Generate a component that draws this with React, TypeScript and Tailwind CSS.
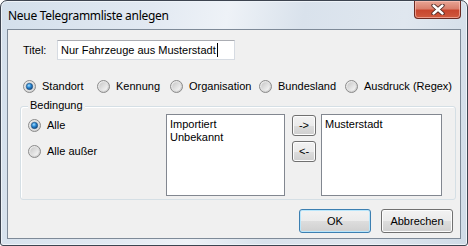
import React, { useId } from 'react';

const ui = "font-['Liberation_Sans',Arial,sans-serif] text-[11px] text-black";

const Radio: React.FC<{ label: string; checked?: boolean }> = ({ label, checked }) => {
  const id = useId().replace(/:/g, '');
  return (
    <div className="flex items-center">
      <svg width="13" height="13" viewBox="0 0 13 13" className="shrink-0">
        <defs>
          <linearGradient id={`o${id}`} x1="0" y1="0" x2="1" y2="1">
            <stop offset="0" stopColor="#f4f4f4" />
            <stop offset="1" stopColor="#c9c9c9" />
          </linearGradient>
          <linearGradient id={`i${id}`} x1="0" y1="0" x2="1" y2="1">
            <stop offset="0" stopColor="#c8c8c8" />
            <stop offset="1" stopColor="#f8f8f8" />
          </linearGradient>
          <radialGradient id={`b${id}`} cx="0.4" cy="0.35" r="0.7">
            <stop offset="0" stopColor="#a6e0ff" />
            <stop offset="0.45" stopColor="#2b8ad6" />
            <stop offset="1" stopColor="#0f3e72" />
          </radialGradient>
        </defs>
        <circle cx="6.5" cy="6.5" r="6" fill={`url(#o${id})`} stroke="#8a8a8a" />
        <circle cx="6.5" cy="6.5" r="4.2" fill={`url(#i${id})`} />
        {checked && <circle cx="6.5" cy="6.5" r="3.2" fill={`url(#b${id})`} stroke="#1c4f80" strokeWidth="0.6" />}
      </svg>
      <span className="ml-[6px] leading-[13px]">{label}</span>
    </div>
  );
};

const WinButton: React.FC<{ label: string; def?: boolean; className?: string }> = ({ label, def, className }) => (
  <div
    className={`flex items-center justify-center rounded-[3px] border ${
      def ? 'border-[#3c7fb1] shadow-[inset_0_0_0_1px_#b9e6fb]' : 'border-[#707070] shadow-[inset_0_0_0_1px_#fcfcfc]'
    } bg-[linear-gradient(to_bottom,#f2f2f2_0%,#ebebeb_50%,#dddddd_51%,#cfcfcf_100%)] ${className ?? ''}`}
  >
    <span className="leading-none">{label}</span>
  </div>
);

const ListBox: React.FC<{ items: string[]; className?: string }> = ({ items, className }) => (
  <div className={`border border-[#828790] bg-white pl-[3px] pt-[3px] leading-[13px] ${className ?? ''}`}>
    {items.map(i => (
      <div key={i}>{i}</div>
    ))}
  </div>
);

export default function App() {
  return (
    <div className="w-[468px] h-[246px] bg-white">
      <div className="w-[468px] h-[246px] rounded-t-[7px] rounded-b-[3px] border border-[#3d4450] bg-[linear-gradient(100deg,#d3dfeb_0%,#e2e9f2_30%,#eef2f7_45%,#d9e2ec_60%,#e0e7ef_80%,#d0dbe7_100%)] shadow-[inset_0_0_0_1px_#eef3f8] flex flex-col px-[6px] pb-[6px]">
        <div className="h-[28px] flex items-start shrink-0">
          <span className="mt-[7px] ml-[1px] font-['Noto_Sans','Open_Sans',sans-serif] text-[12px] leading-[16px] text-black tracking-[-0.3px]">
            Neue Telegrammliste anlegen
          </span>
          <div className="ml-auto w-[47px] h-[18px] rounded-b-[4px] border border-t-0 border-[#6b2a22] bg-[linear-gradient(to_bottom,#e8a595_0%,#d9806d_45%,#c8462e_55%,#cf5a3e_100%)] shadow-[inset_0_0_0_1px_rgba(255,200,190,0.6)] flex items-center justify-center">
            <svg width="14" height="11" viewBox="0 0 14 11">
              <path d="M2.5 1.5 L11.5 9.5 M11.5 1.5 L2.5 9.5" stroke="#4a2420" strokeWidth="4.2" strokeLinecap="round" />
              <path d="M2.5 1.5 L11.5 9.5 M11.5 1.5 L2.5 9.5" stroke="#ffffff" strokeWidth="2.4" strokeLinecap="round" />
            </svg>
          </div>
        </div>
        <div className={`flex-1 border border-[#7e8a98] bg-[#f0f0f0] flex flex-col ${ui}`}>
          <div className="flex items-center h-[20px] mt-[10px] ml-[15px]">
            <span className="w-[34px]">Titel:</span>
            <div className="w-[178px] h-[20px] border border-[#d6dbe2] border-t-[#abadb3] bg-white flex items-center pl-[3px]">
              <span>Nur Fahrzeuge aus Musterstadt</span>
              <span className="w-px h-[14px] bg-black ml-px" />
            </div>
          </div>
          <div className="flex items-center mt-[20px] ml-[15px] h-[13px]">
            <div className="w-[74px]"><Radio label="Standort" checked /></div>
            <div className="w-[73px]"><Radio label="Kennung" /></div>
            <div className="w-[89px]"><Radio label="Organisation" /></div>
            <div className="w-[86px]"><Radio label="Bundesland" /></div>
            <Radio label="Ausdruck (Regex)" />
          </div>
          <div className="relative ml-[12px] mt-[13px] w-[436px] h-[94px] rounded-[3px] border border-[#d5dfe5] shadow-[inset_1px_1px_0_#ffffff] flex pt-[7px] pl-[7px]">
            <span className="absolute left-[7px] top-[-8px] bg-[#f0f0f0] px-[2px] leading-[13px]">Bedingung</span>
            <div className="w-[138px] flex flex-col pt-[5px]">
              <Radio label="Alle" checked />
              <div className="mt-[13px]"><Radio label="Alle außer" /></div>
            </div>
            <ListBox items={['Importiert', 'Unbekannt']} className="w-[119px] h-[82px]" />
            <div className="ml-[7px] w-[24px] flex flex-col pt-[1px]">
              <WinButton label="->" className="h-[21px]" />
              <WinButton label="<-" className="h-[21px] mt-[5px]" />
            </div>
            <ListBox items={['Musterstadt']} className="ml-[5px] w-[121px] h-[82px]" />
          </div>
          <div className="flex justify-end gap-[10px] mt-[9px] pr-[7px]">
            <WinButton label="OK" def className="w-[72px] h-[24px]" />
            <WinButton label="Abbrechen" className="w-[72px] h-[24px]" />
          </div>
        </div>
      </div>
    </div>
  );
}
